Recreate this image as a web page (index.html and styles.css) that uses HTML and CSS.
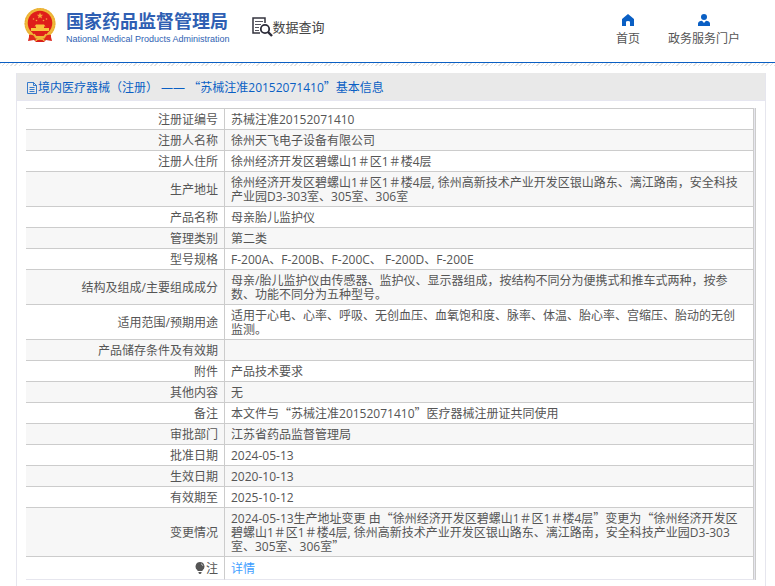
FILE: index.html
```html
<!DOCTYPE html>
<html lang="zh-CN">
<head>
    <meta charset="UTF-8">
    <meta name="viewport" content="width=device-width, initial-scale=1.0">
    <title>国家药品监督管理局 数据查询</title>
    <link rel="stylesheet" href="styles.css">
</head>
<body>
    <!-- Header -->
    <header class="header">
        <div class="brand">
            <svg class="emblem" viewBox="0 0 32 34">
                <path d="M6 25 L4 33 L10 32 L12 34 L20 34 L22 32 L28 33 L26 25 Z" fill="#d9201a"/>
                <circle cx="16" cy="15.500" r="15.500" fill="#f0b93a"/>
                <circle cx="16" cy="15.500" r="14.800" fill="none" stroke="#e3a834" stroke-width="1" stroke-dasharray="1.500 1.500"/>
                <circle cx="16" cy="15" r="12.300" fill="#df1f1a"/>
                <path d="M16 4.500l.9 2.200 2.300.1-1.800 1.500.6 2.300-2-1.300-2 1.300.6-2.300-1.800-1.500 2.300-.1z" fill="#f5a93c"/>
                <g fill="#f5a93c">
                    <circle cx="9.500" cy="11" r=".8"/>
                    <circle cx="12.500" cy="12.500" r=".8"/>
                    <circle cx="19.500" cy="12.500" r=".8"/>
                    <circle cx="22.500" cy="11" r=".8"/>
                </g>
                <path d="M12 16.500h8l1.500 2h-11zM12 18.500h8v1.500h-8zM7 20h18v3H7z" fill="#f8c43c"/>
                <path d="M8 24.500h16l-3 3.500H11z" fill="#df1f1a"/>
                <path d="M5 27q5-1 6 3l-1 2-5 0zM27 27q-5-1-6 3l1 2 5 0z" fill="#e02a1c"/>
                <path d="M10 26q2 4 6 4t6-4M12 33q0-2 4-2t4 2" fill="none" stroke="#f0b93a" stroke-width="1.500"/>
            </svg>
            <div class="brand-text">
                <div class="brand-name">国家药品监督管理局</div>
                <div class="brand-en">National Medical Products Administration</div>
            </div>
        </div>
        <div class="search-title">
            <svg class="search-icon" viewBox="0 0 21 20">
                <path d="M13 6V1H1v15h7" fill="none" stroke="#34343f" stroke-width="1.500"/>
                <path d="M3 4.500h8M3 7.500h6M3 10.500h4M3 13.500h4" stroke="#55555f" stroke-width="1.200"/>
                <circle cx="13" cy="12" r="4.200" fill="#fff" stroke="#2b2b38" stroke-width="1.800"/>
                <path d="M16 15l4 4" stroke="#2b2b38" stroke-width="2.400"/>
            </svg>
            <span>数据查询</span>
        </div>
        <nav class="nav">
            <a class="nav-item" href="#">
                <svg class="nav-icon" viewBox="0 0 12 12"><path d="M6 0l6 5v7H8V8q0-1-2-1t-2 1v4H0V5z" fill="#0a5fc4"/></svg>
                <span>首页</span>
            </a>
            <a class="nav-item" href="#">
                <svg class="nav-icon" viewBox="0 0 12 12"><circle cx="6" cy="3" r="3" fill="#0a5fc4"/><path d="M0 12V9.500Q.5 7 4 6.800L6 9l2-2.200q3.500.2 4 2.700V12z" fill="#0a5fc4"/></svg>
                <span>政务服务门户</span>
            </a>
        </nav>
    </header>

    <!-- Detail panel -->
    <main class="panel">
        <h1 class="panel-title">
            <svg class="doc-icon" viewBox="0 0 12 12"><path d="M1.500.5h6l3 3v8h-9zM7.500.5v3h3M3.500 5.500h5M3.500 7.500h5M3.500 9.500h5" fill="none" stroke="#0a5fc4" stroke-width="0.800"/></svg>
            <span>境内医疗器械（注册） —— <span class="quote">“</span>苏械注准20152071410<span class="quote">”</span>基本信息</span>
        </h1>
        <div class="panel-body">
            <table class="detail">
                <tr><th scope="row">注册证编号</th><td>苏械注准20152071410</td></tr>
                <tr><th scope="row">注册人名称</th><td>徐州天飞电子设备有限公司</td></tr>
                <tr><th scope="row">注册人住所</th><td>徐州经济开发区碧螺山1＃区1＃楼4层</td></tr>
                <tr><th scope="row">生产地址</th><td>徐州经济开发区碧螺山1＃区1＃楼4层, 徐州高新技术产业开发区银山路东、漓江路南，安全科技产业园D3-303室、305室、306室</td></tr>
                <tr><th scope="row">产品名称</th><td>母亲胎儿监护仪</td></tr>
                <tr><th scope="row">管理类别</th><td>第二类</td></tr>
                <tr><th scope="row">型号规格</th><td>F-200A、F-200B、F-200C、 F-200D、F-200E</td></tr>
                <tr><th scope="row">结构及组成/主要组成成分</th><td>母亲/胎儿监护仪由传感器、监护仪、显示器组成，按结构不同分为便携式和推车式两种，按参数、功能不同分为五种型号。</td></tr>
                <tr><th scope="row">适用范围/预期用途</th><td>适用于心电、心率、呼吸、无创血压、血氧饱和度、脉率、体温、胎心率、宫缩压、胎动的无创监测。</td></tr>
                <tr><th scope="row">产品储存条件及有效期</th><td></td></tr>
                <tr><th scope="row">附件</th><td>产品技术要求</td></tr>
                <tr><th scope="row">其他内容</th><td>无</td></tr>
                <tr><th scope="row">备注</th><td>本文件与<span class="quote">“</span>苏械注准20152071410<span class="quote">”</span>医疗器械注册证共同使用</td></tr>
                <tr><th scope="row">审批部门</th><td>江苏省药品监督管理局</td></tr>
                <tr><th scope="row">批准日期</th><td>2024-05-13</td></tr>
                <tr><th scope="row">生效日期</th><td>2020-10-13</td></tr>
                <tr><th scope="row">有效期至</th><td>2025-10-12</td></tr>
                <tr><th scope="row">变更情况</th><td>2024-05-13生产地址变更 由<span class="quote">“</span>徐州经济开发区碧螺山1＃区1＃楼4层<span class="quote">”</span>变更为<span class="quote">“</span>徐州经济开发区碧螺山1＃区1＃楼4层, 徐州高新技术产业开发区银山路东、漓江路南，安全科技产业园D3-303室、305室、306室<span class="quote">”</span></td></tr>
                <tr class="note">
                    <th scope="row"><svg class="bulb" viewBox="0 0 10 12"><path d="M5 0a4.500 4.500 0 0 1 2.500 8.200V9h-5v-.8A4.500 4.500 0 0 1 5 0zM3.500 10h3v1l-1 1h-1l-1-1z" fill="#555"/><path d="M6 1.800q1.500.4 1.800 2" fill="none" stroke="#ddd" stroke-width="0.800"/></svg>注</th>
                    <td><a href="#">详情</a></td>
                </tr>
            </table>
        </div>
    </main>
</body>
</html>
```
FILE: styles.css
```css
* {
    box-sizing: border-box;
}

body {
    margin: 0;
    min-height: 100vh;
    display: flex;
    flex-direction: column;
    background-color: #fff;
    color: #555;
    font-family: "Open Sans", "Noto Sans CJK SC", sans-serif;
    font-size: 12px;
    line-height: 14px;
}

a {
    text-decoration: none;
}

svg {
    display: block;
    flex: none;
}

/* Header */
.header {
    display: flex;
    align-items: flex-start;
    height: 66px;
    padding: 0 35px 0 24px;
    /* blue rule with a light hatched strip under it */
    background:
        linear-gradient(#0a5fc4, #0a5fc4) 0 62px / 100% 1px no-repeat,
        repeating-linear-gradient(135deg, #e2e2e2 0 1px, #fff 1px 3px) 0 63px / 100% 3px no-repeat;
}

.brand {
    display: flex;
    gap: 10px;
    padding-top: 8px;
}

.emblem {
    width: 32px;
    height: 34px;
}

.brand-text {
    padding-top: 2px;
    color: #2f5fb3;
    white-space: nowrap;
}

.brand-name {
    font-size: 18px;
    font-weight: bold;
    line-height: 22px;
}

.brand-en {
    font-family: "Liberation Sans", sans-serif;
    font-size: 9px;
    line-height: 14px;
}

.search-title {
    display: flex;
    align-items: center;
    padding: 17px 0 0 22px;
    color: #444;
    font-size: 13px;
    line-height: 18px;
    white-space: nowrap;
}

.search-icon {
    width: 21px;
    height: 20px;
}

.nav {
    display: flex;
    gap: 28px;
    margin-left: auto;
    padding-top: 14px;
}

.nav-item {
    display: flex;
    flex-direction: column;
    align-items: center;
    gap: 6px;
    color: #555;
    white-space: nowrap;
}

.nav-icon {
    width: 12px;
    height: 12px;
}

/* Detail panel */
.panel {
    flex: 1;
    margin: 7px 9px 0 16px;
    border: solid #e6e6ee;
    border-width: 0 1px;
}

.panel-title {
    display: flex;
    align-items: center;
    height: 28px;
    margin: 0;
    padding: 2px 9px 0;
    background-color: #e9e9e9;
    border-bottom: 1px solid #e6e6f0;
    color: #0a5fc4;
    font-size: 12px;
    font-weight: normal;
}

.doc-icon {
    width: 12px;
    height: 12px;
}

.panel-body {
    margin: 7px 9px 0;
    border-right: 1px solid #ccc;
}

.detail {
    width: 100%;
    border-collapse: separate;
    border-spacing: 0;
    border-right: 1px solid #e6e6ee;
}

.detail th,
.detail td {
    height: 21px;
    padding: 4px 6px 2px;
    border-top: 1px solid #ccc;
    font-weight: normal;
    vertical-align: middle;
}

.detail th {
    width: 198px;
    text-align: right;
}

.detail td {
    padding-right: 8px;
    border-left: 1px solid #ccc;
    border-right: 1px solid #ccc;
}

.detail tr:nth-child(even) {
    background-color: #f7f7f7;
}

.detail .note th,
.detail .note td {
    height: 24px;
    border-bottom: 1px solid #e6e6ee;
}

.detail a {
    color: #409eff;
}

/* full-width Chinese quotation marks */
.quote {
    font-family: "Noto Sans CJK SC", sans-serif;
    line-height: 0;
}

.bulb {
    display: inline-block;
    width: 10px;
    height: 12px;
    margin-right: 1px;
    vertical-align: -1px;
}
```
